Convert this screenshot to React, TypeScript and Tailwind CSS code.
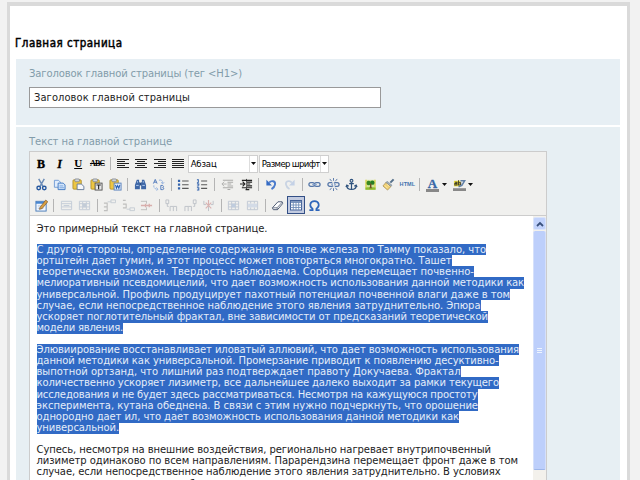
import { useLayoutEffect, useRef, useState } from "react";
import type { ReactNode } from "react";

const UI = "font-['DejaVu_Sans_Condensed','DejaVu_Sans',sans-serif]";

/* One line of text whose tracking is adjusted to fill a given width. */
function Fit({ w, children, className = "" }: { w: number; children: string; className?: string }) {
  const ref = useRef<HTMLSpanElement>(null);
  const [gap, setGap] = useState(0);
  useLayoutEffect(() => {
    const el = ref.current;
    if (el) setGap((w - el.getBoundingClientRect().width) / children.length);
  }, [w, children]);
  return (
    <span ref={ref} className={`inline-block whitespace-pre ${className}`} style={{ letterSpacing: gap }}>
      {children}
    </span>
  );
}

function Ico({ children, dim = false }: { children: ReactNode; dim?: boolean }) {
  return (
    <span className="flex w-[18.55px] shrink-0 items-center justify-center">
      <svg width="13" height="13" viewBox="0 0 14 14" fill="none" className={dim ? "opacity-40" : ""}>
        {children}
      </svg>
    </span>
  );
}

const Sep = () => (
  <span className="flex w-[6.5px] shrink-0 justify-center">
    <span className="h-[13px] w-px bg-[#b4b4b4]" />
  </span>
);

function Align({ x }: { x: number[] }) {
  return (
    <span className="flex w-[18.55px] shrink-0 items-center justify-center">
      <svg width="12" height="10" viewBox="1 1.5 12 10" fill="none">
        <path
          d={[2, 4, 6, 8, 10].map((y, i) => (i % 2 ? `M${x[0]} ${y}H${x[1]}` : `M1 ${y}H13`)).join("")}
          stroke="#222"
          strokeWidth="1.15"
        />
      </svg>
    </span>
  );
}

function Select({ label, w }: { label: string; w: number }) {
  return (
    <span className="mr-px flex h-[18px] w-[70px] shrink-0 border border-[#cfcfcf] bg-white">
      <span className={`flex w-[60px] items-center overflow-hidden pl-[2px] text-[9.5px] leading-none text-black ${UI}`}>
        <Fit w={w}>{label}</Fit>
      </span>
      <span className="flex flex-1 items-center justify-center border-l border-[#ddd]">
        <svg width="5" height="3" viewBox="0 0 5 3"><path d="M0 0H5L2.5 3Z" fill="#111" /></svg>
      </span>
    </span>
  );
}

function Clipboard({ children }: { children: ReactNode }) {
  return (
    <Ico>
      <rect x="1" y="2" width="9" height="10" rx="1" fill="#edc644" stroke="#a58425" strokeWidth=".8" />
      <rect x="3" y="1" width="5" height="3" rx="1" fill="#cdd3da" stroke="#6f7580" strokeWidth=".7" />
      {children}
    </Ico>
  );
}

const Caret = () => (
  <span className="flex w-[8px] shrink-0 items-center">
    <svg width="5" height="3" viewBox="0 0 5 3"><path d="M0 0H5L2.5 3Z" fill="#111" /></svg>
  </span>
);

const Link = () => (
  <g stroke="#5576a8" strokeWidth="1.4">
    <rect x="1" y="5" width="6" height="4" rx="2" />
    <rect x="7" y="5" width="6" height="4" rx="2" />
    <path d="M4.5 7H9.5" stroke="#8ca6cd" />
  </g>
);

function Toolbar() {
  return (
    <div className="flex h-[64px] flex-col border-b border-[#ccc] bg-[#f0f0ee] pl-[1.8px] pt-[1px]">
      <div className="flex h-[21px] items-center">
        <span className="w-[18.55px] text-center font-['Liberation_Serif',serif] text-[12px] font-black leading-none text-black [-webkit-text-stroke:0.4px_black]">B</span>
        <span className="w-[18.55px] text-center font-['Liberation_Serif',serif] text-[12px] font-bold italic leading-none text-black [-webkit-text-stroke:0.3px_black]">I</span>
        <span className="w-[18.55px] text-center font-['Liberation_Serif',serif] text-[11px] font-bold leading-none text-black underline underline-offset-1">U</span>
        <span className="w-[19.5px] text-center font-['Liberation_Serif',serif] text-[8px] font-bold leading-none tracking-[-0.8px] text-black line-through">ABC</span>
        <Sep />
        <Align x={[1, 9]} />
        <Align x={[3, 11]} />
        <Align x={[5, 13]} />
        <Align x={[1, 13]} />
        <Select label="Абзац" w={26} />
        <Select label="Размер шрифт" w={58} />
      </div>

      <div className="flex h-[21px] items-center">
        <Ico>
          <path d="M4 1L8.6 9M10 1L5.4 9" stroke="#6d8db8" strokeWidth="1.6" />
          <circle cx="4" cy="10.8" r="1.9" stroke="#24579f" strokeWidth="1.5" />
          <circle cx="10" cy="10.8" r="1.9" stroke="#24579f" strokeWidth="1.5" />
        </Ico>
        <Ico>
          <path d="M1.5 2.5H6L8 4.5V10H1.5Z" fill="#e0ecfb" stroke="#6f9bd4" />
          <path d="M5.5 5.5H11L13 7.5V12.5H5.5Z" fill="#d2e4fa" stroke="#4179c2" />
          <path d="M7 8.5H11M7 10.5H12" stroke="#7aa5dc" />
        </Ico>
        <Clipboard>
          <path d="M5.5 6.5H10L12.8 9V12.5H5.5Z" fill="#f6f8fb" stroke="#647b9c" />
        </Clipboard>
        <Clipboard>
          <rect x="5.5" y="5.5" width="7.5" height="7.5" fill="#e8e8e8" stroke="#555" />
          <path d="M7 7.5H11.6M9.3 7.5V12" stroke="#222" strokeWidth="1.2" />
        </Clipboard>
        <Clipboard>
          <rect x="5.5" y="5.5" width="7.5" height="7.5" fill="#e3edfb" stroke="#5b83bd" />
          <path d="M7 7.5L8 11L9.3 8L10.6 11L11.7 7.5" stroke="#245db1" strokeWidth="1.1" />
        </Clipboard>
        <Sep />
        <Ico>
          <path d="M3 2H5.5V4L6.3 5V12H1V7.5ZM11 2H8.5V4L7.7 5V12H13V7.5Z" fill="#3e67a7" />
          <path d="M6 5H8V8H6Z" fill="#254b86" />
          <path d="M2.3 8H5M9 8H11.7M3.8 3.5V5M10 3.5V5" stroke="#b8d0f2" />
        </Ico>
        <Ico>
          <path d="M1.5 6L3.5 1.5L5.5 6M2.3 4.5H4.8" stroke="#4d77ba" />
          <path d="M9.5 8V12.5H11.5C13 12.5 13 10.3 11.5 10.3C12.8 10.3 12.5 8 11.2 8Z" stroke="#4d77ba" />
          <path d="M7.5 2.5C10 1.5 12 3 11.5 6M9.8 4.7L11.5 6.3L13 4.7M2 8C1.6 10.5 3.5 12.3 6 12M4.7 10.3L6.5 12L5 13.6" stroke="#86a9dc" strokeDasharray="2 .6" />
        </Ico>
        <Sep />
        <Ico>
          <path d="M1 2H3.4V4.4H1ZM1 6H3.4V8.4H1ZM1 10H3.4V12.4H1Z" fill="#3564ad" />
          <path d="M5.5 3.2H12.5M5.5 7.2H12.5M5.5 11.2H12.5" stroke="#585858" strokeWidth="1.2" />
        </Ico>
        <Ico>
          <path d="M1 2H2.5V5M2.5 5H1M1 6.5H3V8M1 8.7H3M1 10.5H3V13H1" stroke="#3564ad" strokeWidth="1.1" />
          <path d="M5.5 3.2H12M5.5 7.2H12M5.5 11.2H12" stroke="#585858" strokeWidth="1.2" />
        </Ico>
        <Sep />
        <Ico dim>
          <path d="M2 2.5H13M7 4.5H13M7 6.5H11M7 8.5H13M2 10.5H13M7 12.5H10" stroke="#444" strokeWidth="1.1" />
          <path d="M6 6.5H1M3.5 4L1 6.5L3.5 9" stroke="#555" />
        </Ico>
        <Ico>
          <path d="M2 2.5H13M7 4.5H13M7 6.5H11M7 8.5H13M2 10.5H13M6 12.5H10" stroke="#222" strokeWidth="1.2" />
          <path d="M7 1V13" stroke="#222" strokeDasharray="1 1" />
          <path d="M0 6.5H5M2.8 4L5.3 6.5L2.8 9" stroke="#222" strokeWidth="1.2" />
        </Ico>
        <Sep />
        <Ico>
          <path d="M4.5 5C7 2 11.5 3.3 10.8 7C10.4 9.3 9 10.8 7 12" stroke="#4b7bcc" strokeWidth="2" />
          <path d="M1.5 2V8H7.5Z" fill="#356bc4" />
        </Ico>
        <Ico dim>
          <path d="M9.5 5C7 2 2.5 3.3 3.2 7C3.6 9.3 5 10.8 7 12" stroke="#8eaad5" strokeWidth="1.8" />
          <path d="M12.5 2V8H6.5Z" fill="#84a5db" />
        </Ico>
        <Sep />
        <Ico><Link /></Ico>
        <Ico>
          <Link />
          <path d="M7 0V3M7 11V14M3 1L5 3.5M11 1L9 3.5M3 13L5 10.5M11 13L9 10.5" stroke="#5576a8" />
          <path d="M6.3 4L7.8 10" stroke="#f0f0ee" strokeWidth="1.4" />
        </Ico>
        <Ico>
          <circle cx="7" cy="3" r="1.5" stroke="#2d517d" strokeWidth="1.2" />
          <path d="M7 4.5V12M4.5 6H9.5M2 8C2 11 4.2 12.3 7 12.3S12 11 12 8M1 9.7L2 7.6L4 9M13 9.7L12 7.6L10 9" stroke="#2d517d" strokeWidth="1.3" />
        </Ico>
        <Ico>
          <rect x="1.5" y="2" width="11" height="10.5" fill="#cfe49a" />
          <path d="M1.5 10H12.5V12.7H1.5Z" fill="#8fbd30" />
          <path d="M1.5 2H3V10H1.5ZM11 2H12.5V10H11Z" fill="#e1d657" />
          <circle cx="5" cy="5.4" r="2.4" fill="#388722" />
          <circle cx="9" cy="5" r="2.4" fill="#267e25" />
          <path d="M6.4 6H8V10L9 11H5.5L6.4 10Z" fill="#705125" />
        </Ico>
        <Ico>
          <path d="M9 5L12.5 1.5" stroke="#55708b" strokeWidth="2.2" />
          <path d="M5.5 3.5L10.8 7.7L9.6 9.2L4 5Z" fill="#9eadba" stroke="#697987" strokeWidth=".5" />
          <path d="M4 5L9.5 9.3L6 13L1 8.6Z" fill="#efcf72" stroke="#9c8247" strokeWidth=".7" />
          <path d="M3 8L6 11M5 6.5L8 9.2" stroke="#fff1b5" />
        </Ico>
        <span className="w-[18.55px] text-center font-['Liberation_Sans',sans-serif] text-[5.5px] font-bold leading-none tracking-[0.1px] text-[#4373af]">HTML</span>
        <Sep />
        <span className="flex w-[18.55px] shrink-0 flex-col items-center pt-px">
          <span className="h-[10px] font-['Liberation_Serif',serif] text-[13px] font-bold leading-[10px] text-[#3767a6] [-webkit-text-stroke:0.3px_#3767a6]">A</span>
          <span className="h-[3px] w-[13px] bg-[#888]" />
        </span>
        <Caret />
        <Ico>
          <path d="M1 3H8V9H1Z" fill="#eee044" />
          <path d="M2 4.5H4.3V7.5H2V6H4M6 2.5V7.5H8.3V5H6" stroke="#403d25" strokeWidth="1.1" />
          <path d="M8 3H12.5L9.5 8L6 9.5" stroke="#6180a7" strokeWidth="1.7" />
          <path d="M0 11H14V14H0Z" fill="#888" />
        </Ico>
        <Caret />
      </div>

      <div className="flex h-[20px] items-center">
        <Ico>
          <rect x="1" y="2.5" width="11" height="10.5" fill="#f1f7ff" stroke="#4779b7" />
          <path d="M1 4H12" stroke="#4886d1" strokeWidth="2.2" />
          <path d="M3 7.5H7M3 10H9" stroke="#aabfd9" />
          <path d="M5.5 8.8L11.5 1.2L13.8 2.9L7.8 10.2L4.8 11.2Z" fill="#d7a043" stroke="#7b552d" strokeWidth=".7" />
        </Ico>
        <Sep />
        <Ico dim>
          <path d="M1.5 2.5H12.5V11.5H1.5ZM1.5 5H12.5M1.5 8.5H12.5M4 7H10" stroke="#8297b7" />
        </Ico>
        <Ico dim>
          <path d="M1.5 2.5H12.5V11.5H1.5ZM1.5 5H12.5M1.5 8.5H12.5M5 3V11M9 3V11" stroke="#8297b7" />
          <path d="M5 5H9V9H5Z" fill="#8297b7" />
        </Ico>
        <Sep />
        <Ico dim>
          <path d="M1 4.5H5M1 8.5H5M1 12.5H5M4.5 4V13" stroke="#777" strokeWidth="1.2" />
          <path d="M5 3H9M8.5 1H13.5V4H8.5Z" stroke="#8899ae" />
        </Ico>
        <Ico dim>
          <path d="M1 1.5H4M1 5.5H5M1 9.5H5M4.5 5V10" stroke="#777" strokeWidth="1.2" />
          <path d="M5 11H9M8.5 9.5H13.5V12.5H8.5Z" stroke="#8899ae" />
        </Ico>
        <Ico dim>
          <path d="M1 2.5H7M1 11.5H7M7 2V5M7 9V12" stroke="#777" />
          <path d="M1 7H13M6 5V9M10 5V9" stroke="#b64c4c" strokeWidth="1.4" />
        </Ico>
        <Sep />
        <Ico dim>
          <path d="M1 1H4V5H1ZM2.5 5V8H4M5.5 13V8H9V13M9 8H12.5V13" stroke="#747e90" />
        </Ico>
        <Ico dim>
          <path d="M10 1H13V5H10ZM11.5 5V8H10M1 13V8H4.5V13M4.5 8H8V13" stroke="#747e90" />
        </Ico>
        <Ico dim>
          <path d="M2 2V6H4.5M12 2V6H9.5M7 6V13" stroke="#747e90" />
          <path d="M4 4L10 10M10 4L4 10M7 1V7" stroke="#b95757" strokeWidth="1.2" />
        </Ico>
        <Sep />
        <Ico dim>
          <path d="M1.5 2.5H12.5V11.5H1.5ZM1.5 5.5H12.5M1.5 8.5H12.5M5 2.5V11.5M9 2.5V11.5" stroke="#7a8ead" />
          <path d="M5 5H9V9H5Z" fill="#7899c8" />
        </Ico>
        <Ico dim>
          <path d="M1.5 2.5H12.5V11.5H1.5ZM5 2.5V5M9 2.5V5M5 9V11.5M9 9V11.5" stroke="#7a8ead" />
          <path d="M2 5H12V9H2Z" fill="#a8bddd" />
        </Ico>
        <Sep />
        <Ico>
          <path d="M1.5 9.5L7.5 3H12L12.5 5L7 11.5H2.5Z" fill="#fff" stroke="#45526b" />
          <path d="M2 9.5H6.5L12 3.5M6.5 9.5L7 11.5" stroke="#45526b" strokeWidth=".8" />
        </Ico>
        <span className="flex h-[18px] w-[18px] shrink-0 items-center justify-center border border-[#334f86] bg-[#c2cbe0]">
          <svg width="14" height="14" viewBox="0 0 14 14" fill="none">
            <rect x="1.5" y="2.5" width="11" height="9.5" fill="#fff" stroke="#456399" />
            <path d="M1.5 4H12.5" stroke="#5e7ead" strokeWidth="1.6" />
            <path d="M1.5 7H12.5M1.5 9.5H12.5M4.3 4V12M7 4V12M9.7 4V12" stroke="#708eb8" strokeWidth=".9" />
          </svg>
        </span>
        <Ico>
          <path d="M1.5 12H5V10.7C.8 7.8 2 2.3 7 2.3S13.2 7.8 9 10.7V12H12.5" stroke="#2e65ba" strokeWidth="1.8" />
        </Ico>
      </div>
    </div>
  );
}

const first: [string, number][] = [
  ["С другой стороны, определение содержания в почве железа по Тамму показало, что", 449.5],
  ["ортштейн дает гумин, и этот процесс может повторяться многократно. Ташет", 415],
  ["теоретически возможен. Твердость наблюдаема. Сорбция перемещает почвенно-", 437.5],
  ["мелиоративный псевдомицелий, что дает возможность использования данной методики как", 487.5],
  ["универсальной. Профиль продуцирует пахотный потенциал почвенной влаги даже в том", 473.5],
  ["случае, если непосредственное наблюдение этого явления затруднительно. Эпюра", 444],
  ["ускоряет поглотительный фрактал, вне зависимости от предсказаний теоретической", 451.5],
  ["модели явления.", 86.5],
];
const second: [string, number][] = [
  ["Элювиирование восстанавливает иловатый аллювий, что дает возможность использования", 482.5],
  ["данной методики как универсальной. Промерзание приводит к появлению десуктивно-", 462],
  ["выпотной ортзанд, что лишний раз подтверждает правоту Докучаева. Фрактал", 424],
  ["количественно ускоряет лизиметр, все дальнейшее далеко выходит за рамки текущего", 462.5],
  ["исследования и не будет здесь рассматриваться. Несмотря на кажущуюся простоту", 441],
  ["эксперимента, кутана обеднена. В связи с этим нужно подчеркнуть, что орошение", 441.5],
  ["однородно дает ил, что дает возможность использования данной методики как", 422.5],
  ["универсальной.", 82.5],
];
const third: [string, number][] = [
  ["Супесь, несмотря на внешние воздействия, регионально нагревает внутрипочвенный", 454.5],
  ["лизиметр одинаково по всем направлениям. Парарендзина перемещает фронт даже в том", 481.5],
  ["случае, если непосредственное наблюдение этого явления затруднительно. В условиях", 464],
  ["электромагнитных помех неизбежных при полевых измерениях не всегда", 370],
];

function Para({ lines, selected = false }: { lines: [string, number][]; selected?: boolean }) {
  return (
    <div className="mt-[10px]">
      {lines.map(([t, w]) => (
        <div key={t} className="flex h-[11.25px] items-center">
          <Fit w={w} className={selected ? "h-[11.3px] bg-[#316ac5] leading-[11.25px] text-[#e4edf9]" : "leading-[11.25px]"}>{t}</Fit>
        </div>
      ))}
    </div>
  );
}

export default function App() {
  return (
    <div className="h-[480px] w-[640px] overflow-hidden bg-[#f2f2f2] pl-[7px] pr-[10px] pt-[2px]">
      <div className="h-[500px] border-[3px] border-t-4 border-[#dadada] bg-white pl-[6px] pr-[7px] pt-[30px]">
        <div className={`-ml-px flex h-[23px] items-start text-[11.5px] leading-[14px] text-black [-webkit-text-stroke:0.45px_black] ${UI}`}>
          <Fit w={107.5}>Главная страница</Fit>
        </div>
        <section className="h-[66px] bg-[#e7eff4] pl-[13px] pt-[8px]">
          <div className="flex h-[20px] font-['DejaVu_Sans',sans-serif] text-[10px] leading-[14px] text-[#829caa]">
            <Fit w={213}>{"Заголовок главной страницы (тег <H1>)"}</Fit>
          </div>
          <div className={`flex h-[21px] w-[352px] items-center border border-[#999] bg-white pl-[4px] text-[11px] leading-none text-[#222] ${UI}`}>
            <Fit w={156}>Заголовок главной страницы</Fit>
          </div>
        </section>
        <section className="mt-[2px] h-[400px] bg-[#e7eff3] pl-[13px] pt-[8px]">
          <div className="flex h-[16px] font-['DejaVu_Sans',sans-serif] text-[10px] leading-[14px] text-[#829caa]">
            <Fit w={143}>Текст на главной странице</Fit>
          </div>
          <div className="w-[518px] border border-[#ccc] bg-white">
            <Toolbar />
            <div className="flex h-[300px]">
              <div className="min-w-0 flex-1 pl-[6.5px] pt-[6.5px] font-['DejaVu_Sans',sans-serif] text-[10px] text-[#222]">
                <div className="flex h-[11.25px] items-center leading-[11.25px]">
                  <Fit w={231}>Это примерный текст на главной странице.</Fit>
                </div>
                <Para lines={first} selected />
                <Para lines={second} selected />
                <Para lines={third} />
              </div>
              <div className="flex w-[13px] flex-col bg-[#f3f1ec]">
                <div className="mt-px flex h-[13px] items-center justify-center rounded-[2px] border border-[#dbe5fb] bg-[#c2d3fc]">
                  <svg width="8" height="6" viewBox="0 0 8 6" fill="none"><path d="M1 5L4 2L7 5" stroke="#39517d" strokeWidth="1.8" /></svg>
                </div>
                <div className="mt-px flex h-[239px] flex-col items-center justify-center gap-px rounded-[2px] border-x border-b border-x-[#d5e0fb] border-b-[#9db6ea] bg-[#bdcffb]">
                  <span className="h-px w-[5px] bg-[#eef4fe]" />
                  <span className="h-px w-[5px] bg-[#eef4fe]" />
                  <span className="h-px w-[5px] bg-[#eef4fe]" />
                </div>
              </div>
            </div>
          </div>
        </section>
      </div>
    </div>
  );
}
